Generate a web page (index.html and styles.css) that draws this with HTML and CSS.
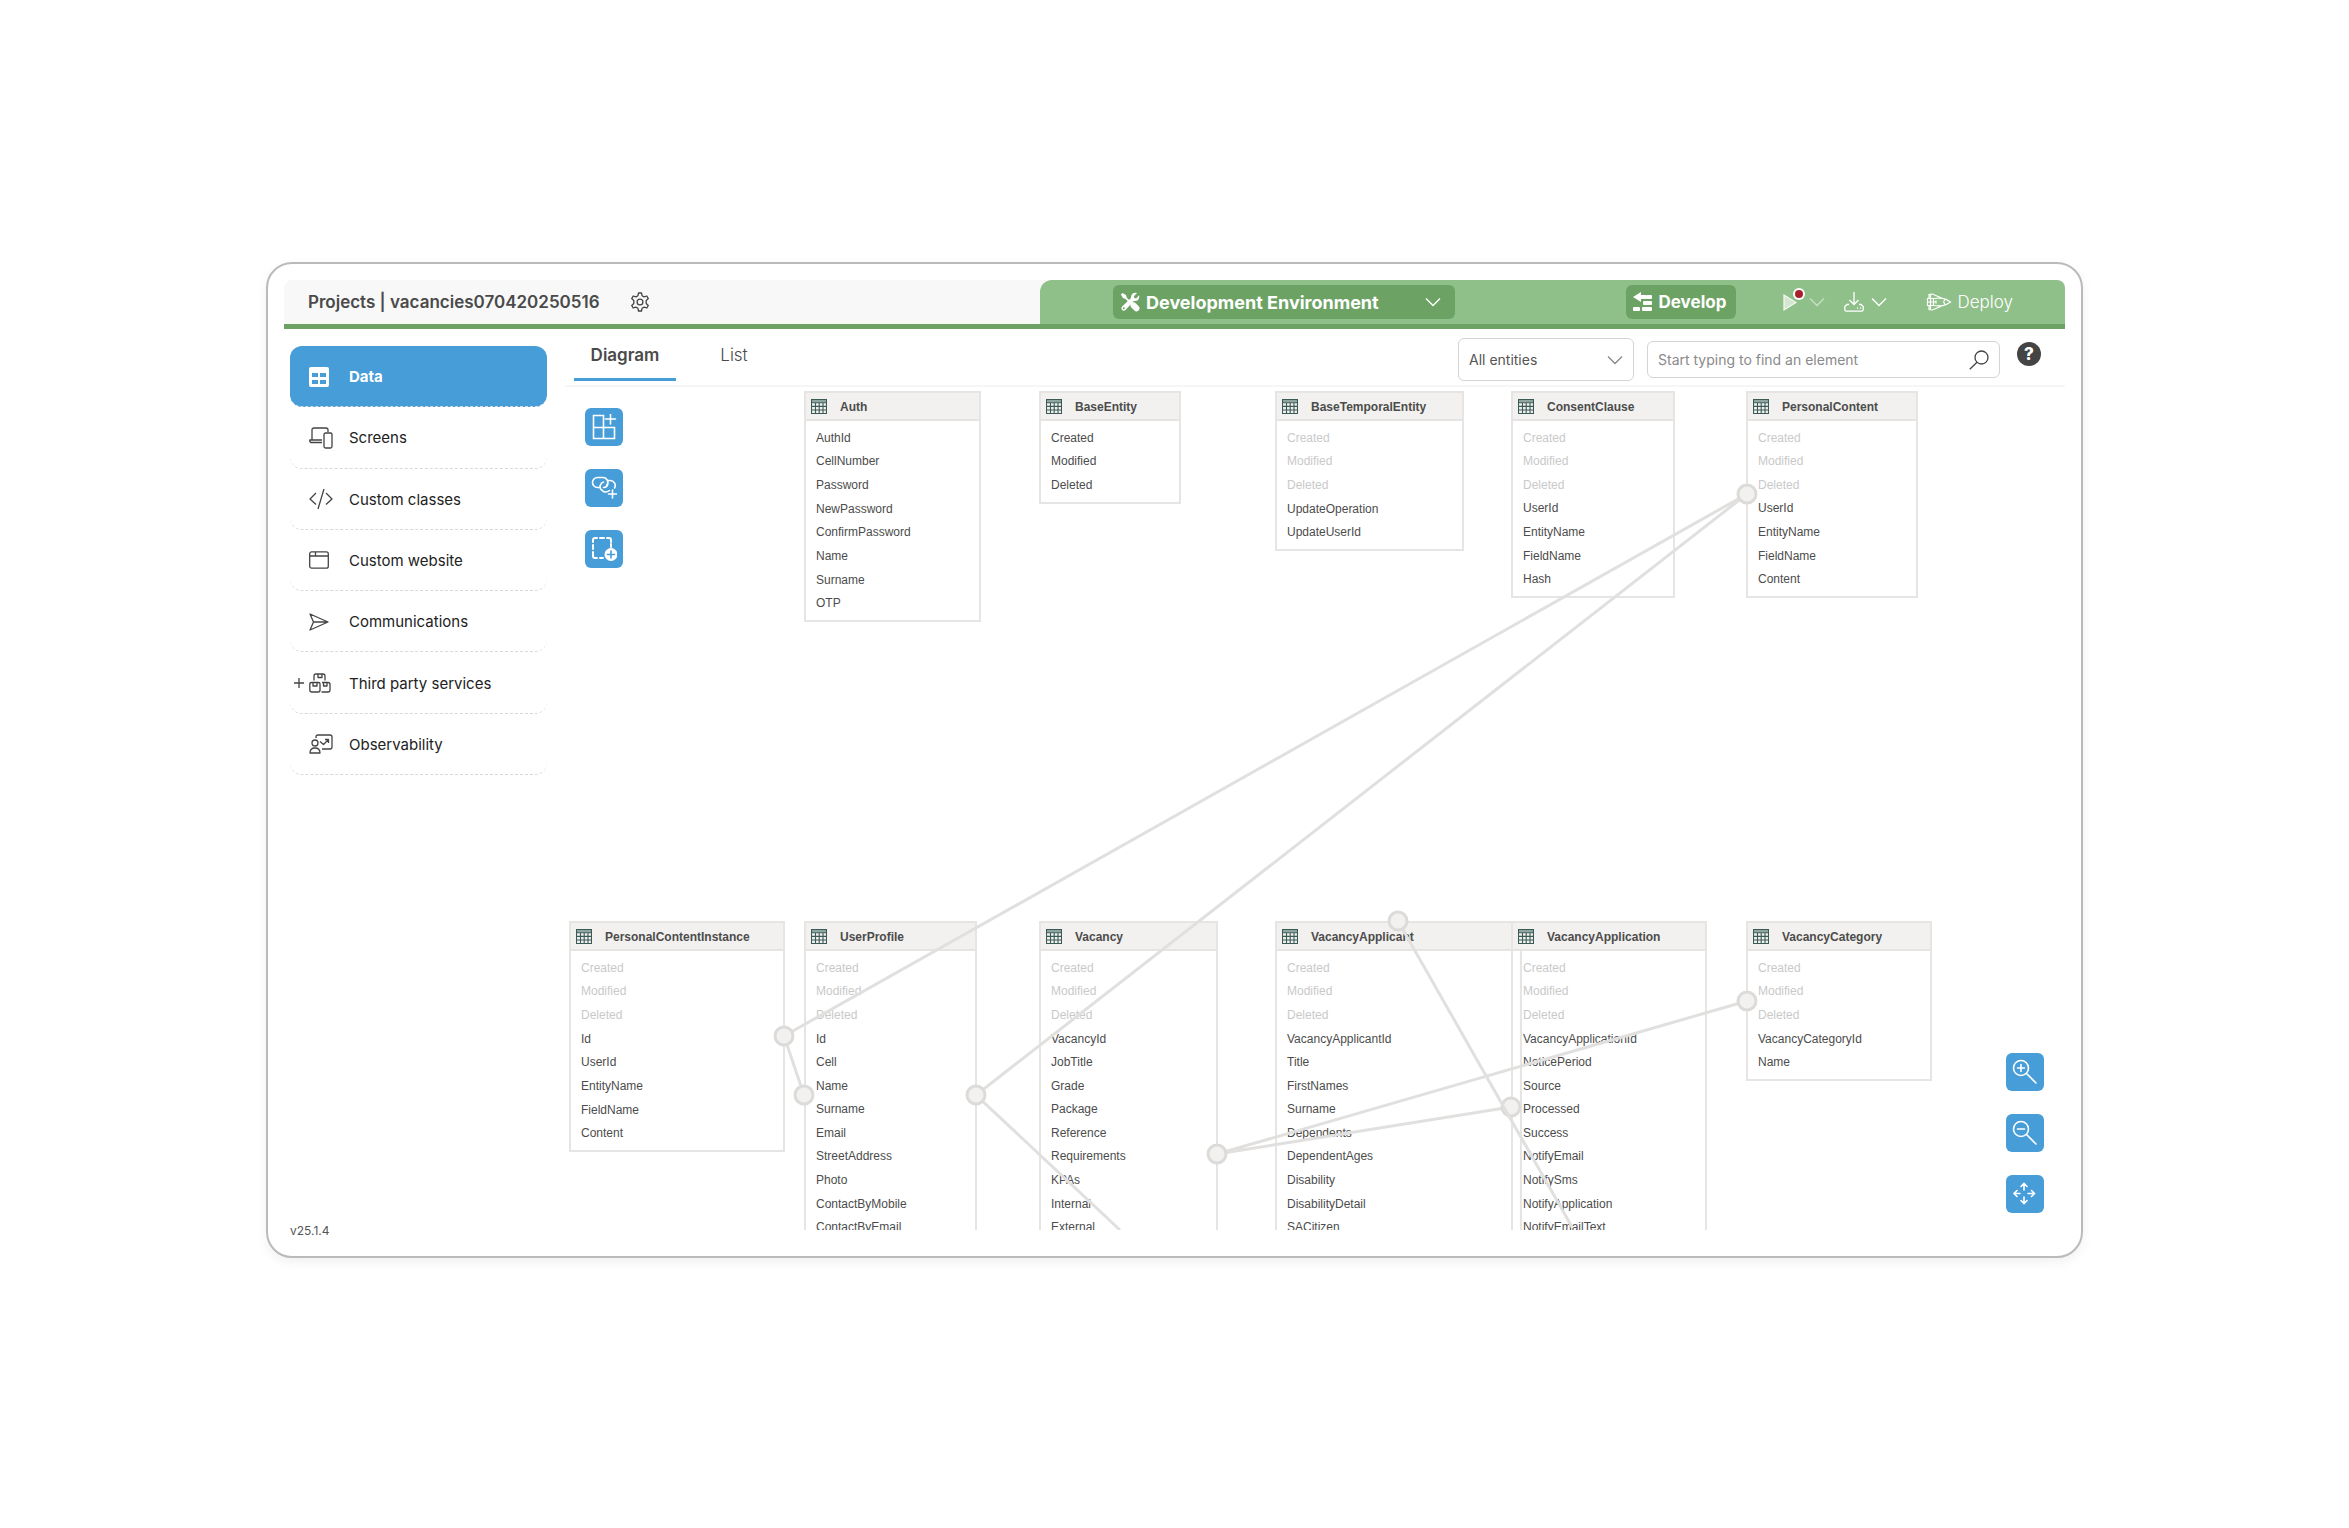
FILE: index.html
```html
<!DOCTYPE html>
<html lang="en">
<head>
<meta charset="utf-8">
<meta name="viewport" content="width=device-width, initial-scale=1">
<title>vacancies070420250516 - Data</title>
<link rel="stylesheet" href="styles.css">
</head>
<body>
<svg class="defs" aria-hidden="true">
  <symbol id="chevron" viewBox="0 0 16 10"><path d="M1 1.5 8 8.5 15 1.5"/></symbol>
  <symbol id="entity" viewBox="0 0 16 15"><path d="M.5 .5h15v3H.5z" fill="#8fa5a2"/><path d="M.5 .5h15v14H.5zM.5 3.7h15M.5 7.4h15M.5 11h15M4.5 3.7v10.8M8.2 3.7v10.8M12 3.7v10.8" fill="none" stroke="#3a5a56" stroke-width="1.1"/></symbol>
</svg>
<div class="window">
  <header class="topbar">
    <div class="project">
      <h1>Projects | vacancies070420250516</h1>
      <button class="plain" aria-label="Project settings"><svg class="line" width="20" height="20" viewBox="0 0 20 20"><path d="M8.500 1h3l.6 2.800 2 1.100 2.700-.9 1.500 2.600-2.100 1.900v3l2.100 1.900-1.500 2.600-2.700-.9-2 1.100-.6 2.800h-3l-.6-2.800-2-1.100-2.700.9-1.500-2.600 2.100-1.900v-3L1.700 6.600 3.200 4l2.700.9 2-1.100z"/><circle cx="10" cy="10" r="2.900"/></svg></button>
    </div>
    <div class="actions">
      <label class="environment">
        <svg width="20" height="20" viewBox="0 0 20 20"><path d="M2.500 1 6 3l.8 2.800 3 3L8.600 10l-3-3L3 6 .9 2.600zM11.500 10.600c2.200-1 3.400-.2 4.200.6l3.200 3.300c2.300 2.500-1.800 6.500-4.200 4.200l-3.400-3.300c-1.400-1.500-1.200-3 .2-4.800z" fill="#fff"/><path d="M17 1.100 13.900 4.200 14.300 6l1.800.4 3-3.100c.9 3.600-1.800 6.400-5.300 5.700L5.500 17.900c-2.100 2.300-5.600-1-3.300-3.300L11 6.100C10.500 2.500 13.500 0 17 1.100z" fill="#fff"/><circle cx="3.800" cy="16.200" r="1" fill="#6ca364"/></svg>
        <select aria-label="Environment"><option>Development Environment</option></select>
        <svg class="chevron light" width="16" height="10"><use href="#chevron"/></svg>
      </label>
      <button class="develop"><svg width="20" height="20" viewBox="0 0 20 20" fill="#fff"><path d="M0 5 8 0v3h5v4H8v3z"/><rect x="13" y="3" width="6" height="4" rx="1"/><rect x="10" y="9" width="9" height="4" rx="1"/><rect x="0" y="15" width="7" height="4" rx="1"/><rect x="9" y="15" width="10" height="4" rx="1"/></svg>Develop</button>
      <button class="plain run" aria-label="Run"><svg width="24" height="24" viewBox="0 0 24 24"><path d="M1 7v15l12-7.500z" fill="#d3e6d0" stroke="#f3f8f2" stroke-width="1.200"/><circle cx="16" cy="6" r="6" fill="#fff"/><circle cx="16" cy="6" r="4" fill="#a9202a"/></svg></button>
      <button class="plain run-menu" aria-label="Run options"><svg class="chevron" width="16" height="10"><use href="#chevron"/></svg></button>
      <button class="plain download" aria-label="Download"><svg width="20" height="20" viewBox="0 0 20 20" fill="none" stroke="#fff" stroke-width="1.300"><path d="M10 0v12M5.500 8 10 12.500 14.500 8M5 12.500H3L.8 14.500v3.200q0 1.500 1.500 1.500h15.400q1.500 0 1.500-1.500v-3.200L17 12.500h-2M13 16h1M16 16h1"/></svg></button>
      <button class="plain download-menu" aria-label="Download options"><svg class="chevron light" width="16" height="10"><use href="#chevron"/></svg></button>
      <button class="plain deploy"><svg width="26" height="20" viewBox="0 0 26 20" fill="none" stroke="#fff" stroke-width="1.200"><path d="M7.500 6.500C15 5.500 19 6 24.500 10 19 14 15 14.500 7.500 13.500zM3 6.500v-4L6.500 2l9 4M3 13.500v4l3.500.500 9-4M7.500 6.500h-6v7h6M1.500 10H10M4.500 2v16M10 8.500v3M19 8q-2.500 2 0 4"/></svg>Deploy</button>
    </div>
  </header>
  <div class="workspace">
    <aside class="sidebar">
      <nav>
        <a class="active" href="#data"><svg width="20" height="20" viewBox="0 0 20 20"><rect width="20" height="20" rx="2" fill="#fff"/><path d="M3 6h6v4H3zM11 6h6v4h-6zM3 13h6v4H3zM11 13h6v4h-6z" fill="#479dd8"/></svg>Data</a>
        <a href="#screens"><svg class="line" width="24" height="22" viewBox="0 0 24 22"><path d="M3 13V3q0-2 2-2h12q2 0 2 2v2M13 13H.8v1.500l1 1H13"/><rect x="15" y="6" width="8" height="15" rx="1.500"/></svg>Screens</a>
        <a href="#classes"><svg class="line" width="24" height="22" viewBox="0 0 24 22"><path d="M7 5 1 11l6 5.500M17 5l6 6-6 5.500M15 1 9 21"/></svg>Custom classes</a>
        <a href="#website"><svg class="line" width="20" height="18" viewBox="0 0 20 18"><rect x=".7" y=".8" width="18.600" height="16.400" rx="2"/><path d="M.7 5h18.600M6.500 1v4"/></svg>Custom website</a>
        <a href="#communications"><svg class="line" width="20" height="18" viewBox="0 0 20 18"><path d="M1 1 19 9 1 17 4.500 9zM4.500 9H19"/></svg>Communications</a>
        <a href="#services"><svg class="line plus" width="10" height="10" viewBox="0 0 10 10"><path d="M5 0v10M0 5h10"/></svg><svg class="line" width="22" height="20" viewBox="0 0 22 20"><path d="M5 7.500V3q0-2 2-2h7q2 0 2 2v4.500M9 1v3.500h4V1M11 18v-7q0-1.500-1.500-1.500H2.700Q.8 9.500.8 11v6q0 2 2 2h6.500q1.700 0 1.700-2M13 9.500h6q2 0 2 2V17q0 2-2 2h-6.500M4 9.500V13h4V9.500M14.500 9.500V13H18V9.500"/></svg>Third party services</a>
        <a href="#observability"><svg class="line" width="24" height="20" viewBox="0 0 24 20"><circle cx="6" cy="9" r="3"/><path d="M1 19q0-5 5-5t5 5zM7 4V3q0-2 2-2h12q2 0 2 2v10q0 2-2 2h-8M11 7.500l3.500 3L19 6M16 5.500h3.500V9"/></svg>Observability</a>
      </nav>
      <small>v25.1.4</small>
    </aside>
    <main>
      <div class="toolbar">
        <div class="tabs" role="tablist">
          <button role="tab" aria-selected="true">Diagram</button>
          <button role="tab" aria-selected="false">List</button>
        </div>
        <div class="filters">
          <label class="field scope"><select aria-label="Entity scope"><option>All entities</option></select><svg class="chevron grey" width="16" height="12"><use href="#chevron"/></svg></label>
          <label class="field search"><input type="search" aria-label="Find an element" placeholder="Start typing to find an element"><svg class="line" width="20" height="20" viewBox="0 0 20 20"><circle cx="12.500" cy="7.500" r="6.500"/><path d="M8 12.200.8 19.300"/></svg></label>
          <button class="help" aria-label="Help">?</button>
        </div>
      </div>
      <div class="canvas">
        <article class="node" style="left:239px;top:4px;width:177px;height:231px"><h2><svg width="16" height="15"><use href="#entity"/></svg>Auth</h2><ul><li>AuthId</li><li>CellNumber</li><li>Password</li><li>NewPassword</li><li>ConfirmPassword</li><li>Name</li><li>Surname</li><li>OTP</li></ul></article>
        <article class="node" style="left:474px;top:4px;width:142px;height:113px"><h2><svg width="16" height="15"><use href="#entity"/></svg>BaseEntity</h2><ul><li>Created</li><li>Modified</li><li>Deleted</li></ul></article>
        <article class="node" style="left:710px;top:4px;width:189px;height:160px"><h2><svg width="16" height="15"><use href="#entity"/></svg>BaseTemporalEntity</h2><ul><li class="inherited">Created</li><li class="inherited">Modified</li><li class="inherited">Deleted</li><li>UpdateOperation</li><li>UpdateUserId</li></ul></article>
        <article class="node" style="left:946px;top:4px;width:164px;height:207px"><h2><svg width="16" height="15"><use href="#entity"/></svg>ConsentClause</h2><ul><li class="inherited">Created</li><li class="inherited">Modified</li><li class="inherited">Deleted</li><li>UserId</li><li>EntityName</li><li>FieldName</li><li>Hash</li></ul></article>
        <article class="node" style="left:1181px;top:4px;width:172px;height:207px"><h2><svg width="16" height="15"><use href="#entity"/></svg>PersonalContent</h2><ul><li class="inherited">Created</li><li class="inherited">Modified</li><li class="inherited">Deleted</li><li>UserId</li><li>EntityName</li><li>FieldName</li><li>Content</li></ul></article>
        <article class="node" style="left:4px;top:534px;width:216px;height:231px"><h2><svg width="16" height="15"><use href="#entity"/></svg>PersonalContentInstance</h2><ul><li class="inherited">Created</li><li class="inherited">Modified</li><li class="inherited">Deleted</li><li>Id</li><li>UserId</li><li>EntityName</li><li>FieldName</li><li>Content</li></ul></article>
        <article class="node" style="left:239px;top:534px;width:173px;height:325px"><h2><svg width="16" height="15"><use href="#entity"/></svg>UserProfile</h2><ul><li class="inherited">Created</li><li class="inherited">Modified</li><li class="inherited">Deleted</li><li>Id</li><li>Cell</li><li>Name</li><li>Surname</li><li>Email</li><li>StreetAddress</li><li>Photo</li><li>ContactByMobile</li><li>ContactByEmail</li></ul></article>
        <article class="node" style="left:474px;top:534px;width:179px;height:325px"><h2><svg width="16" height="15"><use href="#entity"/></svg>Vacancy</h2><ul><li class="inherited">Created</li><li class="inherited">Modified</li><li class="inherited">Deleted</li><li>VacancyId</li><li>JobTitle</li><li>Grade</li><li>Package</li><li>Reference</li><li>Requirements</li><li>KPAs</li><li>Internal</li><li>External</li></ul></article>
        <article class="node" style="left:710px;top:534px;width:247px;height:325px"><h2><svg width="16" height="15"><use href="#entity"/></svg>VacancyApplicant</h2><ul><li class="inherited">Created</li><li class="inherited">Modified</li><li class="inherited">Deleted</li><li>VacancyApplicantId</li><li>Title</li><li>FirstNames</li><li>Surname</li><li>Dependents</li><li>DependentAges</li><li>Disability</li><li>DisabilityDetail</li><li>SACitizen</li></ul></article>
        <article class="node" style="left:946px;top:534px;width:196px;height:325px"><h2><svg width="16" height="15"><use href="#entity"/></svg>VacancyApplication</h2><ul><li class="inherited">Created</li><li class="inherited">Modified</li><li class="inherited">Deleted</li><li>VacancyApplicationId</li><li>NoticePeriod</li><li>Source</li><li>Processed</li><li>Success</li><li>NotifyEmail</li><li>NotifySms</li><li>NotifyApplication</li><li>NotifyEmailText</li></ul></article>
        <article class="node" style="left:1181px;top:534px;width:186px;height:160px"><h2><svg width="16" height="15"><use href="#entity"/></svg>VacancyCategory</h2><ul><li class="inherited">Created</li><li class="inherited">Modified</li><li class="inherited">Deleted</li><li>VacancyCategoryId</li><li>Name</li></ul></article>
        <svg class="links" aria-hidden="true">
          <path d="M219 649 1182 107 411 708 555 843M219 649 239 708M652 767 1182 614M652 767 946 720"/>
          <circle cx="1182" cy="107" r="9"/><circle cx="219" cy="649" r="9"/><circle cx="239" cy="708" r="9"/><circle cx="411" cy="708" r="9"/><circle cx="652" cy="767" r="9"/><circle cx="946" cy="720" r="9"/><circle cx="1182" cy="614" r="9"/>
          <path d="M833 534 1007 840"/><circle cx="833" cy="534" r="9"/>
        </svg>
        <div class="tools create">
          <button aria-label="Add entity"><svg width="26" height="26" viewBox="0 0 26 26"><path d="M2.500 1.500h10v23h-10zM2.500 13.500h21v11h-21M12.500 13.500v11M19.500 0v10M14.500 5h10"/></svg></button>
          <button aria-label="Add relation"><svg width="26" height="26" viewBox="0 0 26 26"><path d="M8 12.500H6.500a4.500 4.500 0 0 1 0-10H12a4.800 4.800 0 0 1 3.500 8M12.500 7a4.800 4.800 0 0 0-2 8l2 1.500q3 1.500 6-1M12.500 12.500c3 0 4.500-2 4.500-5.500M17 5.500h2a5 5 0 0 1 4.500 7.500M21.500 15v8M17.500 19h8"/></svg></button>
          <button aria-label="Select group"><svg width="26" height="26" viewBox="0 0 26 26"><path d="M2 6V4q0-2 2-2h2M9 2h4M16 2h2q2 0 2 2v2M2 9v4M2 16v4q0 2 2 2h2M9 22h3M20 8v3" stroke-width="2"/><circle cx="20" cy="18.500" r="6.500" fill="#fff" stroke="none"/><path d="M20 15v7M16.500 18.500h7" stroke="#479dd8"/></svg></button>
        </div>
        <div class="tools zoom">
          <button aria-label="Zoom in"><svg width="26" height="26" viewBox="0 0 26 26"><circle cx="9" cy="9" r="7.500"/><path d="M14.500 14.500 24 24M5.500 9h7M9 5.500v7"/></svg></button>
          <button aria-label="Zoom out"><svg width="26" height="26" viewBox="0 0 26 26"><circle cx="9" cy="9" r="7.500"/><path d="M14.500 14.500 24 24M5.500 9h7"/></svg></button>
          <button aria-label="Fit to screen"><svg width="26" height="26" viewBox="0 0 26 26"><path d="M12 9V2.500M9 5.500l3-3 3 3M12 16v6.500M9 19.500l3 3 3-3M8 12.500H2M5 9.500l-3 3 3 3M16 12.500h6.500M19.500 9.500l3 3-3 3"/></svg></button>
        </div>
      </div>
    </main>
  </div>
</div>
</body>
</html>
```
FILE: styles.css
```css
* { box-sizing: border-box; }

body {
  margin: 0;
  min-height: 100vh;
  padding: 262px 266px 270px;
  display: flex;
  background: #fff;
  color: #222;
  font-family: Inter, "Liberation Sans", sans-serif;
  font-size: 15px;
}

h1, h2, ul { margin: 0; padding: 0; }
ul { list-style: none; }
svg { flex: none; display: block; }
button, select, input { font: inherit; color: inherit; }
button { cursor: pointer; }
.defs { position: absolute; width: 0; height: 0; }

.line { fill: none; stroke: #444; stroke-width: 1.3; stroke-linejoin: round; }
.chevron { fill: none; stroke: #c8dfc5; stroke-width: 1.3; }
.chevron.light { stroke: #fff; }
.chevron.grey { stroke: #888; }

.window {
  flex: 1;
  min-width: 0;
  display: flex;
  flex-direction: column;
  padding: 16px;
  border: 2px solid #b9baba;
  border-radius: 26px;
  box-shadow: 0 4px 12px rgba(0, 0, 0, 0.06);
}

/* Top bar */
.topbar {
  display: grid;
  grid-template-columns: 756fr 1025fr;
  height: 49px;
  border-bottom: 5px solid #6ca364;
  border-radius: 8px 8px 0 0;
  background: #f8f8f8;
}
.project { display: flex; align-items: center; gap: 30px; padding-left: 24px; }
.project h1 { font-size: 17px; font-weight: 600; color: #4a4a4a; white-space: nowrap; }
.plain { display: flex; align-items: center; padding: 0; border: 0; background: none; }
.actions {
  display: flex;
  align-items: center;
  padding: 0 52px 0 73px;
  border-radius: 12px 8px 0 0;
  background: #90c08a;
  color: #fff;
  font-size: 17px;
}
.environment, .develop {
  display: flex;
  align-items: center;
  gap: 6px;
  height: 34px;
  padding: 0 7px;
  border: 0;
  border-radius: 6px;
  background: #6ca364;
  font-weight: 700;
}
.environment { width: 342px; padding-right: 14px; margin-right: auto; font-size: 18px; }
.environment select, .scope select {
  flex: 1;
  min-width: 0;
  padding: 0;
  border: 0;
  background: none;
  appearance: none;
  outline: none;
}
.develop { width: 110px; }
.run { margin-left: 47px; padding-bottom: 4px; }
.run-menu { margin-left: 2px; }
.download { margin-left: 19px; }
.download-menu { margin-left: 7px; }
.deploy { gap: 6px; margin-left: 39px; font-weight: 300; }

/* Sidebar */
.workspace { flex: 1; display: flex; min-height: 0; }
.sidebar {
  flex: none;
  width: 281px;
  display: flex;
  flex-direction: column;
  justify-content: space-between;
  padding: 17px 18px 0 6px;
}
.sidebar nav { display: grid; grid-auto-rows: 1fr; height: 429px; }
.sidebar nav a {
  display: grid;
  grid-template-columns: 40px 1fr;
  align-items: center;
  padding: 1px 0 0 19px;
  border-bottom: 1px dashed #d9d9d9;
  border-radius: 12px;
  color: inherit;
  text-decoration: none;
  position: relative;
}
.sidebar nav a.active { background: #479dd8; color: #fff; font-weight: 700; }
.plus { position: absolute; left: 4px; }
.sidebar small { font-size: 12px; line-height: 18px; color: #555; }

/* Toolbar */
main { flex: 1; min-width: 0; display: flex; flex-direction: column; padding-bottom: 10px; }
.toolbar {
  display: flex;
  justify-content: space-between;
  height: 58px;
  padding: 0 24px 0 9px;
  border-bottom: 2px solid #f6f6f6;
}
.tabs { display: flex; gap: 7px; }
.tabs button {
  width: 102px;
  height: 52px;
  padding: 3px 0 0;
  border: 0;
  border-bottom: 3px solid transparent;
  background: none;
  color: #4a4a4a;
  font-size: 17px;
  font-weight: 300;
}
.tabs button[aria-selected="true"] { border-color: #479dd8; font-weight: 600; }
.filters { display: flex; align-items: center; padding-top: 5px; }
.field {
  display: flex;
  align-items: center;
  padding: 0 10px;
  border: 1px solid #d4d4d4;
  border-radius: 6px;
  color: #555;
  font-size: 14px;
}
.scope { width: 176px; height: 43px; margin-right: 13px; }
.search { width: 353px; height: 37px; margin-right: 17px; }
.search input {
  flex: 1;
  min-width: 0;
  padding: 0;
  border: 0;
  background: none;
  outline: none;
}
.search input::placeholder { color: #8a8a8a; }
.help {
  width: 24px;
  height: 24px;
  margin-bottom: 12px;
  padding: 0;
  border: 0;
  border-radius: 50%;
  background: #444;
  color: #fff;
  font-size: 17px;
  font-weight: 800;
  line-height: 24px;
}

/* Diagram */
.canvas { flex: 1; position: relative; overflow: hidden; min-height: 600px; }
.node {
  position: absolute;
  display: flex;
  flex-direction: column;
  border: 2px solid #e6e5e4;
  color: #4c4c4c;
  font-family: "Liberation Sans", Arial, sans-serif;
  font-size: 12px;
}
.node h2 {
  display: flex;
  align-items: center;
  gap: 13px;
  height: 28px;
  padding: 1px 0 0 5px;
  border-bottom: 2px solid #e5e4e2;
  background: #f2f1ef;
  font-size: 12px;
  font-weight: 700;
}
.node ul {
  flex: 1;
  display: grid;
  grid-auto-rows: 1fr;
  align-items: center;
  padding: 5px 0 5px 10px;
}
.inherited { color: #c9c9c9; }
.links {
  position: absolute;
  inset: 0;
  width: 100%;
  height: 100%;
  fill: none;
  stroke: #e1e0df;
  stroke-width: 3;
  pointer-events: none;
}
.links circle { fill: #f2f1ef; stroke: #dcdbd9; }
.tools { position: absolute; display: flex; flex-direction: column; gap: 23px; }
.create { left: 20px; top: 21px; }
.zoom { right: 21px; bottom: 17px; }
.tools button {
  width: 38px;
  height: 38px;
  display: grid;
  place-items: center;
  padding: 0;
  border: 0;
  border-radius: 6px;
  background: #479dd8;
}
.tools svg { fill: none; stroke: #fff; stroke-width: 1.6; stroke-linecap: round; }
```
